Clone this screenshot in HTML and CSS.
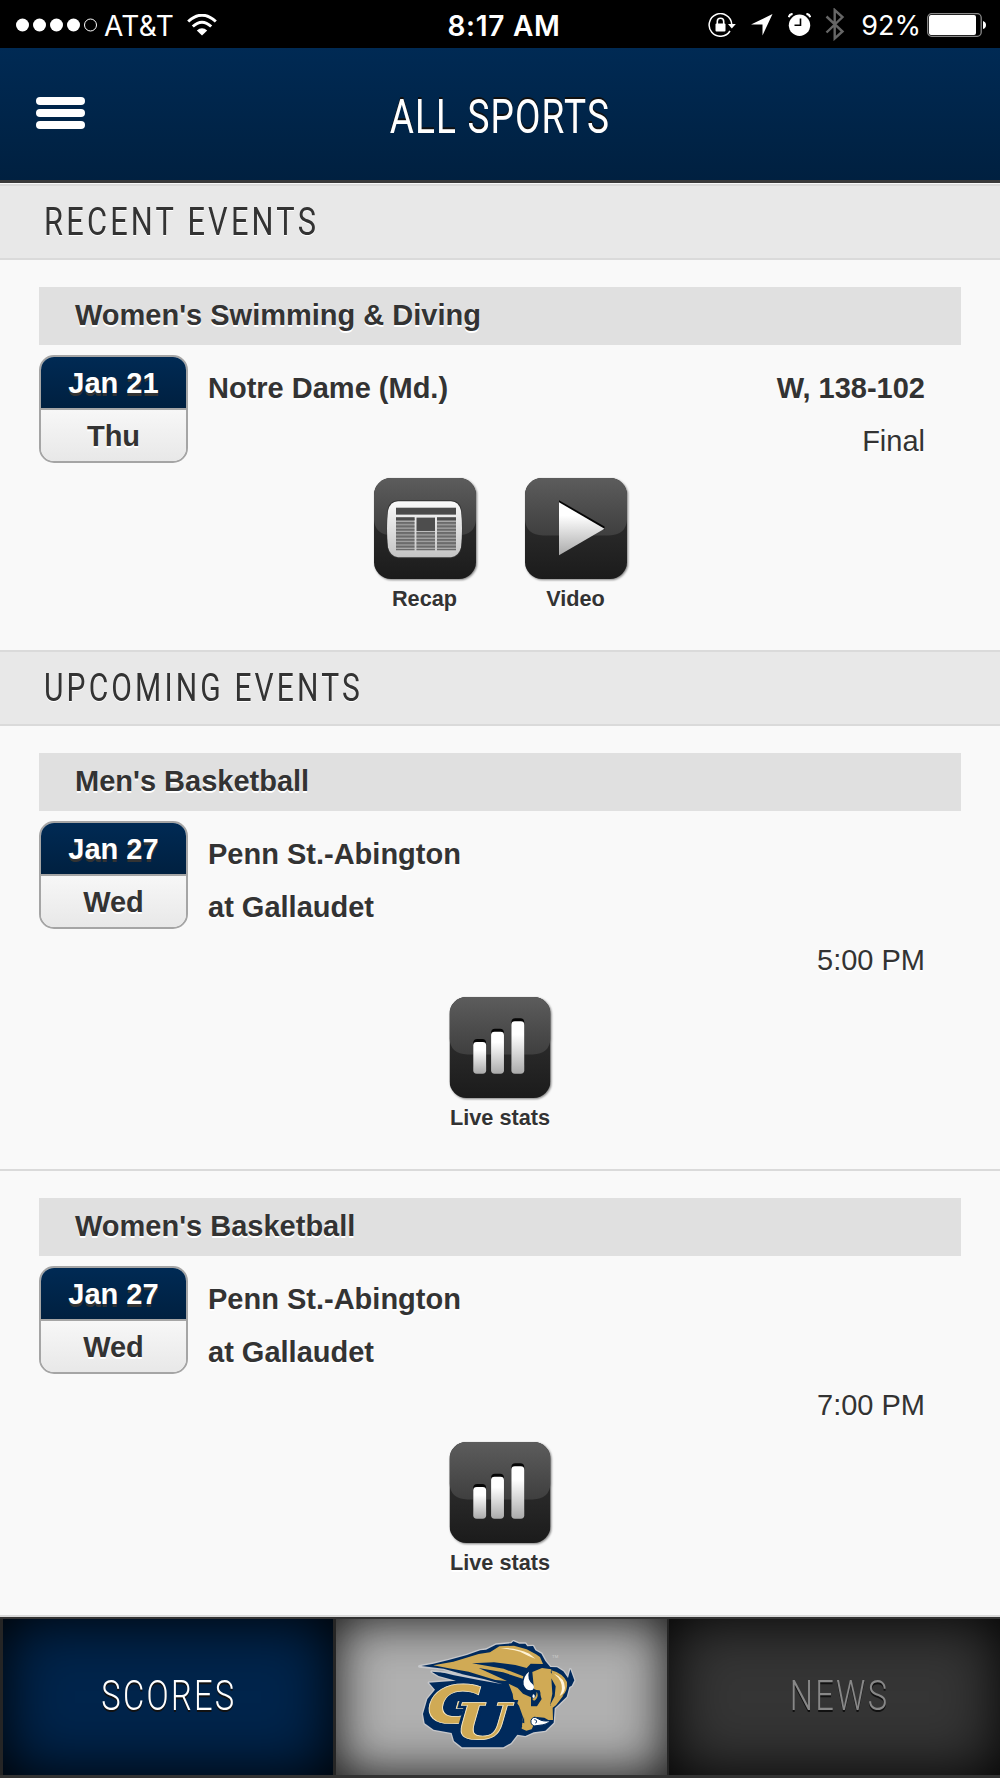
FILE: index.html
```html
<!DOCTYPE html>
<html lang="en">
<head>
  <meta charset="utf-8">
  <title>All Sports</title>
  <link rel="stylesheet" href="styles.css">
</head>
<body>
  <!-- shared icon artwork -->
  <svg class="defs" width="0" height="0">
    <defs>
      <linearGradient id="tile" x1="0" y1="0" x2="0" y2="1">
        <stop offset="0" stop-color="#2c2c2c"/>
        <stop offset="0.55" stop-color="#282828"/>
        <stop offset="1" stop-color="#1b1b1b"/>
      </linearGradient>
      <linearGradient id="gloss" x1="0" y1="0" x2="0" y2="1">
        <stop offset="0" stop-color="#5c5c5c"/>
        <stop offset="1" stop-color="#3f3f3f"/>
      </linearGradient>
      <linearGradient id="silver" x1="0" y1="0" x2="0" y2="1">
        <stop offset="0.25" stop-color="#fff"/>
        <stop offset="1" stop-color="#aaa"/>
      </linearGradient>
      <linearGradient id="paper" x1="0" y1="0" x2="0" y2="1">
        <stop offset="0" stop-color="#fafafa"/>
        <stop offset="1" stop-color="#c4c4c4"/>
      </linearGradient>
      <pattern id="lines" width="4" height="3.4" patternUnits="userSpaceOnUse" y="41">
        <rect width="4" height="2.2" fill="#6a6a6a"/>
      </pattern>
      <symbol id="tile-bg" viewBox="0 0 102 102">
        <rect width="102" height="102" rx="17" fill="url(#tile)"/>
        <path d="M17 0H85A17 17 0 0 1 102 17V42Q101 58 84 58H18Q1 58 0 42V17A17 17 0 0 1 17 0Z" fill="url(#gloss)"/>
      </symbol>
      <symbol id="stats" viewBox="0 0 102 102">
        <use href="#tile-bg" width="102" height="102"/>
        <g fill="#050505">
          <rect x="24" y="42.500" width="13" height="30" rx="4"/>
          <rect x="42" y="32" width="13" height="40" rx="4"/>
          <rect x="62.500" y="21.500" width="13" height="50" rx="4"/>
        </g>
        <g fill="url(#silver)">
          <rect x="24" y="45.500" width="13" height="32" rx="3.500"/>
          <rect x="42" y="35" width="13" height="42.500" rx="3.500"/>
          <rect x="62.500" y="24.500" width="13" height="53" rx="3.500"/>
        </g>
      </symbol>
    </defs>
  </svg>

  <div class="status-bar">
    <div class="carrier">
      <svg width="82" height="14" viewBox="0 0 82 14">
        <g fill="#fff">
          <circle cx="6.500" cy="7" r="6.500"/>
          <circle cx="23.500" cy="7" r="6.500"/>
          <circle cx="40.500" cy="7" r="6.500"/>
          <circle cx="57.500" cy="7" r="6.500"/>
        </g>
        <circle cx="74.500" cy="7" r="6" fill="none" stroke="#fff"/>
      </svg>
      <span>AT&amp;T</span>
      <svg width="30" height="22" viewBox="0 0 30 22">
        <path d="M1.200 7.500Q15 -5 28.800 7.500" fill="none" stroke="#fff" stroke-width="3"/>
        <path d="M5.800 12.500Q15 4 24.200 12.500" fill="none" stroke="#fff" stroke-width="3"/>
        <path d="M15 21.500L9.800 16.500Q15 12 20.200 16.500Z" fill="#fff"/>
      </svg>
    </div>
    <div class="time">8:17 AM</div>
    <div class="indicators">
      <svg width="28" height="24" viewBox="0 0 28 24">
        <path d="M23.700 11A11.300 11.300 0 1 0 22 18" fill="none" stroke="#fff" stroke-width="1.500"/>
        <path d="M20 11H27.800L23.800 15.500Z" fill="#fff"/>
        <rect x="7.500" y="10.500" width="10" height="8" rx="1" fill="#fff"/>
        <path d="M9.300 11V8.500A3.200 3.200 0 0 1 15.700 8.500V11" fill="none" stroke="#fff" stroke-width="1.600"/>
      </svg>
      <svg class="arrow" width="22" height="22" viewBox="0 0 22 22">
        <path d="M21.500 0L11.500 21.500V10.500H0Z" fill="#fff"/>
      </svg>
      <svg class="alarm" width="23" height="23" viewBox="0 0 23 23">
        <circle cx="11.500" cy="12.300" r="10.700" fill="#fff"/>
        <path d="M0.800 4.200Q1.500 1 4.600 0.900M18.400 0.900Q21.500 1 22.200 4.200" fill="none" stroke="#fff" stroke-width="2"/>
        <path d="M12.500 5.500V12.300H6.500" fill="none" stroke="#000" stroke-width="1.600"/>
      </svg>
      <svg class="bluetooth" width="20" height="33" viewBox="0 0 20 33">
        <path d="M1.500 8.500L17.500 23.500L9.700 30.500V2L17.500 9L1.500 24.500" fill="none" stroke="#666" stroke-width="2.400"/>
      </svg>
      <span class="percent">92%</span>
      <svg width="59" height="24" viewBox="0 0 59 24">
        <rect x="0.700" y="0.700" width="53.500" height="22.600" rx="4" fill="none" stroke="#888" stroke-width="1.300"/>
        <rect x="2" y="2" width="47" height="20" rx="2" fill="#fff"/>
        <path d="M56 8Q59 9 59 12T56 16Z" fill="#fff"/>
      </svg>
    </div>
  </div>

  <div class="header">
    <div class="menu">
      <span></span>
      <span></span>
      <span></span>
    </div>
    <h1><span class="title-text">ALL SPORTS</span></h1>
  </div>

  <h2 class="section first"><span class="recent-text">RECENT EVENTS</span></h2>

  <div class="event">
    <div class="sport">Women's Swimming &amp; Diving</div>
    <div class="details">
      <div class="date">
        <div class="day">Jan 21</div>
        <div class="weekday">Thu</div>
      </div>
      <div class="info">
        <div class="row"><b>Notre Dame (Md.)</b><b>W, 138-102</b></div>
        <div class="row right">Final</div>
      </div>
    </div>
    <div class="links">
      <div class="link">
        <svg width="102" height="101" viewBox="0 0 102 102" preserveAspectRatio="none">
          <use href="#tile-bg" width="102" height="102"/>
          <path d="M24 22.500H77Q86 23 87.500 32Q89 51 87.500 70Q86 80 77 81H24Q15 80 13.500 70Q12 51 13.500 32Q15 23 24 22.500Z" fill="#333"/>
          <path d="M24 23.500H77Q85 24 87 33Q89 51 87 70Q85 79 77 80H24Q16 79 14 70Q12 51 14 33Q16 24 24 23.500Z" fill="url(#paper)"/>
          <rect x="22" y="30" width="60" height="7" fill="#4b4b4b"/>
          <path d="M22 39.500H40.500V73H22ZM42.500 54H61V73H42.500ZM63 39.500H82V73H63Z" fill="#aaa"/>
          <path d="M22 39.500H40.500V73H22ZM42.500 54H61V73H42.500ZM63 39.500H82V73H63Z" fill="url(#lines)"/>
          <path d="M22 40H40.500V42.500H22ZM63 40H82V42.500H63Z" fill="#4d4d4d"/>
          <rect x="42.500" y="40" width="18.500" height="13.500" fill="#4d4d4d"/>
        </svg>
        <span>Recap</span>
      </div>
      <div class="link">
        <svg width="102" height="101" viewBox="0 0 102 102" preserveAspectRatio="none">
          <use href="#tile-bg" width="102" height="102"/>
          <path d="M34 22.500L79.500 49V52L34 60Z" fill="#050505"/>
          <path d="M34 24.500L79.500 51.200L34 78Z" fill="url(#silver)"/>
        </svg>
        <span>Video</span>
      </div>
    </div>
  </div>

  <h2 class="section"><span class="upcoming-text">UPCOMING EVENTS</span></h2>

  <div class="event upcoming">
    <div class="sport">Men's Basketball</div>
    <div class="details">
      <div class="date">
        <div class="day">Jan 27</div>
        <div class="weekday">Wed</div>
      </div>
      <div class="info">
        <div class="row"><b>Penn St.-Abington</b></div>
        <div class="row"><b>at Gallaudet</b></div>
        <div class="row right">5:00 PM</div>
      </div>
    </div>
    <div class="links">
      <div class="link">
        <svg width="102" height="101"><use href="#stats"/></svg>
        <span>Live stats</span>
      </div>
    </div>
  </div>

  <div class="event upcoming last">
    <div class="sport">Women's Basketball</div>
    <div class="details">
      <div class="date">
        <div class="day">Jan 27</div>
        <div class="weekday">Wed</div>
      </div>
      <div class="info">
        <div class="row"><b>Penn St.-Abington</b></div>
        <div class="row"><b>at Gallaudet</b></div>
        <div class="row right">7:00 PM</div>
      </div>
    </div>
    <div class="links">
      <div class="link">
        <svg width="102" height="101"><use href="#stats"/></svg>
        <span>Live stats</span>
      </div>
    </div>
  </div>

  <div class="tabs">
    <div class="tab scores"><span class="scores-text">SCORES</span></div>
    <div class="tab home">
      <svg width="160" height="112" viewBox="52 90 480 336">
        <!-- navy silhouette with light edge -->
        <path d="M62 172L105 164L150 153L205 138L245 124L262 122L292 107L338 103L344 97L362 104L380 104L386 112L403 111L410 124L428 134L440 156L455 174L475 175L494 187L508 207L515 181L527 214L519 230L512 234L504 263L487 280L468 298L465 341L440 365L405 370L380 381L356 377L337 402L314 415L190 415L166 396L159 372L105 362L78 343L73 315L86 270L109 242L91 221L172 215L120 201L99 188L190 195L135 179Z" fill="#002a5c" stroke="#c6c7ca" stroke-width="8" stroke-linejoin="round"/>
        <path d="M68 171L105 164L150 153L205 138L245 124L262 122L292 107L338 103L344 97L362 104L380 104L386 112L403 111L410 124L428 134L440 156L455 174L475 175L494 187L508 207L515 181L527 214L519 230L512 234L504 263L487 280L468 298L465 341L440 365L405 370L380 381L356 377L337 402L314 415L190 415L166 396L159 372L105 362L78 343L73 315L86 270L109 242L91 221L172 215L120 201L99 188L190 195L135 179Z" fill="#002a5c"/>
        <!-- mane -->
        <path d="M104 169L164 158L240 135L274 130L302 112L346 110L384 121L412 136L424 144L433 165L396 164L384 177L350 168L286 160L220 163L315 179L374 202L372 209L313 190L240 177L325 216L290 213L210 188L150 178Z" fill="#d0aa55"/>
        <path d="M306 118Q350 114 392 134L410 149Q388 141 364 128Q340 121 306 118Z" fill="#fff3d5"/>
        <path d="M104 184L178 193L255 210L312 226L240 213L166 199Z" fill="#c5c8cd"/>
        <!-- head -->
        <path d="M330 224L357 237L373 254L397 265L397 292L415 292L429 270L421 246L406 240L401 189L430 177L458 181L456 190L475 212L471 260L454 290L474 280L484 261L494 259L502 242L493 261L472 289L462 296L463 333L449 333L437 326L407 323L397 334L405 348L399 361L383 365L369 359L373 324L361 290L354 281L344 270L342 255Z" fill="#d0aa55"/>
        <path d="M458 184Q492 193 505 219Q508 246 491 260L471 287L452 289L466 252L464 214Z" fill="#d0aa55"/>
        <path d="M466 194Q499 207 499 237Q497 254 483 261Q495 239 486 218Q480 205 466 194Z" fill="#fff5dc"/>
        <path d="M458 208L471 232L468 262L454 289L461 254Z" fill="#002a5c"/>
        <path d="M391 188Q383 211 404 228Q409 237 401 243Q382 247 375 227Q372 202 391 188Z" fill="#fff"/>
        <path d="M398 243L423 244Q432 261 412 286L398 291Q411 272 398 265Z" fill="#002a5c"/>
        <path d="M414 248Q422 262 410 273Q404 278 401 269Q413 267 414 248Z" fill="#d0aa55"/>
        <path d="M403 256Q411 257 407 267Q401 268 401 262Z" fill="#fff"/>
        <path d="M397 334Q403 319 418 329Q432 339 454 335Q447 347 421 349L406 351Q395 346 397 334Z" fill="#fff" stroke="#002a5c" stroke-width="3"/>
        <path d="M407 332Q418 333 411 343" fill="none" stroke="#002a5c" stroke-width="3"/>
        <path d="M356 377L367 365L359 354L371 354L363 338L377 343L376 323" fill="#002a5c"/>
        <!-- initials -->
        <text class="initial-g" transform="translate(67 342) skewX(-16) scale(1.300 1)">G</text>
        <text class="initial-u outline" transform="translate(153 391) skewX(-16) scale(1.270 1)">U</text>
        <text class="initial-u" transform="translate(153 391) skewX(-16) scale(1.270 1)">U</text>
        <text class="tm" x="460" y="147">TM</text>
      </svg>
    </div>
    <div class="tab news"><span class="news-text">NEWS</span></div>
  </div>
</body>
</html>
```
FILE: styles.css
```css
* {
  box-sizing: border-box;
}
body {
  margin: 0;
  width: 1000px;
  height: 1778px;
  overflow: hidden;
  display: flex;
  flex-direction: column;
  background: #f9f9f9;
  color: #333;
  font-family: "Liberation Sans", Arial, sans-serif;
  font-size: 29px;
}
svg {
  display: block;
  flex: none;
}
.defs {
  position: absolute;
}

/* phone status bar */
.status-bar {
  height: 48px;
  flex: none;
  display: grid;
  grid-template-columns: 1fr auto 1fr;
  align-items: center;
  padding: 1px 14px 0 16px;
  background: #000;
  color: #fff;
  font-family: Inter, sans-serif;
  font-size: 27px;
}
.carrier,
.indicators {
  display: flex;
  align-items: center;
}
.carrier span {
  margin: 2px 13px 0 6px;
  font-size: 28px;
  letter-spacing: 0.4px;
}
.time {
  font-size: 28px;
  font-weight: 600;
  letter-spacing: 0.7px;
  padding: 2px 0 0 6px;
}
.indicators {
  justify-content: flex-end;
}
.arrow {
  margin-left: 15px;
}
.alarm {
  margin-left: 15px;
}
.bluetooth {
  margin-left: 14px;
}
.percent {
  margin: 2px 6px 0 16px;
}

/* title bar */
.header {
  height: 135px;
  flex: none;
  display: grid;
  grid-template-columns: 1fr auto 1fr;
  align-items: center;
  padding: 0 36px;
  background: linear-gradient(#002a54, #002040);
  border-bottom: 3px solid #3a3a3a;
  color: #fff;
}
.menu {
  display: flex;
  flex-direction: column;
  gap: 4px;
  margin-bottom: 3px;
}
.menu span {
  width: 49px;
  height: 8px;
  border-radius: 4px;
  background: #fff;
}
h1,
h2 {
  margin: 0;
  font-weight: 400;
  font-family: Roboto, sans-serif;
  white-space: nowrap;
}
h1 {
  font-size: 49px;
  padding-top: 5px;
  text-shadow: 0 -2px 0 #111;
}
h1 span,
h2 span,
.tab span {
  display: inline-block;
}
.title-text {
  transform: scaleX(0.755);
  letter-spacing: 1.5px;
}

/* list sections */
.section {
  height: 76px;
  flex: none;
  display: flex;
  align-items: center;
  padding: 0 0 2px 44px;
  background: #e8e8e8;
  border-top: 2px solid #dadada;
  border-bottom: 2px solid #dadada;
  font-size: 38.5px;
  text-shadow: 0 1px 0 #fff;
}
.section.first {
  margin-top: 1px;
}
.section span {
  transform-origin: left;
  letter-spacing: 4px;
}
.recent-text {
  transform: scaleX(0.8);
}
.upcoming-text {
  transform: scaleX(0.78);
}
.event {
  height: 390px;
  flex: none;
  padding: 27px 39px 0;
  text-shadow: 0 2px 0 #fff;
}
.event.upcoming {
  height: 445px;
  border-bottom: 2px solid #dadada;
}
.event.last {
  height: 446px;
}
.sport {
  height: 58px;
  padding-left: 36px;
  line-height: 57px;
  font-weight: bold;
  background: #e0e0e0;
}
.details {
  display: flex;
  gap: 20px;
  padding: 10px 36px 0 0;
}
.date {
  width: 149px;
  height: 108px;
  border: 2px solid #a5a5a5;
  border-radius: 15px;
  overflow: hidden;
  text-align: center;
  font-weight: bold;
}
.day {
  height: 53px;
  line-height: 53px;
  color: #fff;
  background: linear-gradient(#002a54, #002040);
  border-bottom: 2px solid #a5a5a5;
  text-shadow: 0 3px 0 #333;
}
.weekday {
  height: 51px;
  line-height: 52px;
  background: linear-gradient(#f7f7f7, #e8e8e8);
}
.info {
  flex: 1;
  padding-top: 7px;
}
.row {
  height: 53px;
  line-height: 53px;
  display: flex;
  justify-content: space-between;
}
.row.right {
  justify-content: flex-end;
}
.links {
  display: flex;
  justify-content: center;
  gap: 49px;
  padding-top: 10px;
}
.link {
  width: 102px;
  display: flex;
  flex-direction: column;
  align-items: center;
  font-size: 21.7px;
  font-weight: bold;
  white-space: nowrap;
}
.link svg {
  filter: drop-shadow(1px 1px 1px rgba(0, 0, 0, 0.5));
}
.link span {
  margin-top: 7px;
}

/* bottom tabs */
.tabs {
  height: 161px;
  flex: none;
  display: grid;
  grid-template-columns: 330px 331px 331px;
  gap: 3px;
  padding-left: 3px;
  border-top: 2px solid #333;
  border-bottom: 3px solid #333;
  background: #252525;
}
.tab {
  display: flex;
  align-items: center;
  justify-content: center;
  padding-bottom: 4px;
  font-family: Roboto, sans-serif;
  font-weight: 300;
  font-size: 43px;
  text-shadow: 0 2px 0 #111;
}
.scores {
  color: #fff;
  background: #00244b;
  box-shadow: inset 0 0 60px #000;
}
.home {
  background: #b0b0b0;
  box-shadow: inset 0 0 50px #111;
  padding-right: 12px;
}
.news {
  color: #888;
  background: #353535;
  box-shadow: inset 0 0 60px #000;
  margin-left: -1px;
  padding-left: 9px;
}
.scores-text,
.news-text {
  transform: scaleX(0.76);
  letter-spacing: 3px;
}
.scores-text {
  margin-left: 2px;
}
.initial-g,
.initial-u {
  font-family: "DejaVu Sans", sans-serif;
  font-weight: bold;
  font-size: 158px;
  fill: #d0aa55;
  stroke: #fff1ce;
  stroke-width: 2px;
  text-shadow: none;
}
.initial-u {
  font-family: "DejaVu Serif", serif;
  font-size: 150px;
}
.outline {
  stroke: #002a5c;
  stroke-width: 16px;
}
.tm {
  font-family: "Liberation Sans", sans-serif;
  font-size: 13px;
  fill: #ccc;
  text-shadow: none;
}
```
